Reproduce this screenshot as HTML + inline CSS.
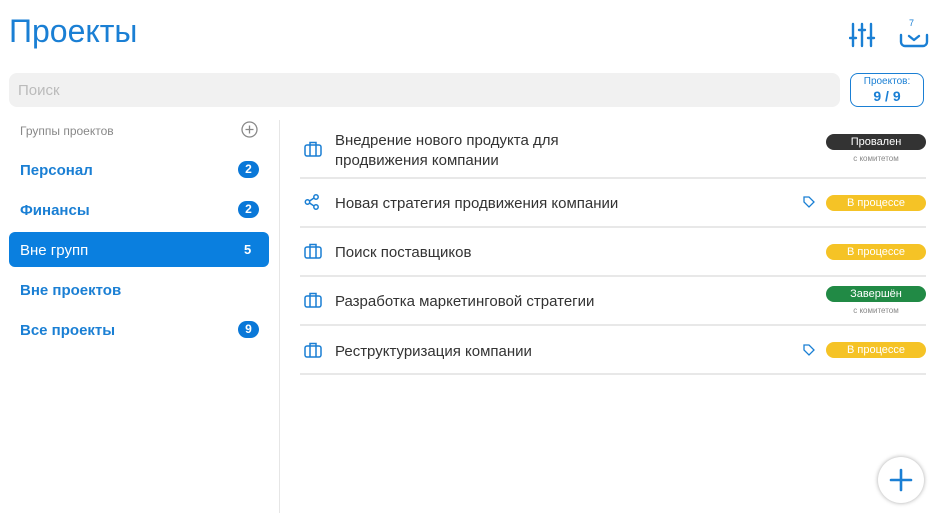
<!DOCTYPE html>
<html><head><meta charset="utf-8"><style>
*{margin:0;padding:0;box-sizing:border-box}
body{width:940px;height:513px;background:#fff;font-family:"Liberation Sans",sans-serif;position:relative;overflow:hidden}
.a{position:absolute}
.side{color:#1a7fd4;font-size:15px;font-weight:bold;left:20px}
.badge{position:absolute;left:238px;width:21px;height:17px;border-radius:9px;background:#0a78d8;color:#fff;font-size:12px;font-weight:bold;text-align:center;line-height:17px}
.sep{position:absolute;left:300px;width:626px;height:2px;background:#e8e8e8}
.t{position:absolute;left:335px;font-size:15px;color:#333;line-height:20px}
.pill{position:absolute;left:826px;width:100px;height:16px;border-radius:8px;font-size:11px;text-align:center;line-height:16px;color:#fff}
.sub{position:absolute;left:826px;width:100px;text-align:center;font-size:8px;color:#888}
.y{background:#f5c326}
svg.i{position:absolute;left:304px}
</style></head><body>
<div class="a" style="left:9px;top:13px;font-size:32px;color:#1a7fd4">Проекты</div>
<svg class="a" style="left:849px;top:22px" width="27" height="26" viewBox="0 0 27 26" fill="none" stroke="#1a7fd4" stroke-width="2.4" stroke-linecap="round"><path d="M4 2v22M13 2v22M22 2v22M1 16h6M10 8h6M19 16h6"/></svg>
<div class="a" style="left:909px;top:18px;font-size:9px;color:#1a7fd4">7</div>
<svg class="a" style="left:899px;top:30px" width="30" height="18" viewBox="0 0 30 18" fill="none" stroke="#1a7fd4" stroke-width="2.4" stroke-linecap="round" stroke-linejoin="round"><path d="M2 5v7a4 4 0 0 0 4 4h18a4 4 0 0 0 4-4V5M10 6l5 4 5-4"/></svg>
<div class="a" style="left:9px;top:73px;width:831px;height:34px;background:#f1f1f1;border-radius:8px;color:#bbb;font-size:15px;padding:9px 9px">Поиск</div>
<div class="a" style="left:850px;top:73px;width:74px;height:34px;border:1.5px solid #1a7fd4;border-radius:8px;color:#1a7fd4;text-align:center"><div style="font-size:10px;margin-top:2px">Проектов:</div><div style="font-size:14px;font-weight:bold;margin-top:1px">9 / 9</div></div>
<div class="a" style="left:20px;top:124px;font-size:12px;color:#888">Группы проектов</div>
<svg class="a" style="left:241px;top:121px" width="17" height="17" viewBox="0 0 17 17" fill="none" stroke="#888" stroke-width="1.3"><circle cx="8.5" cy="8.5" r="7.5"/><path d="M8.5 4.5v8M4.5 8.5h8"/></svg>
<div class="a side" style="top:162px">Персонал</div><div class="badge" style="top:161px">2</div>
<div class="a side" style="top:202px">Финансы</div><div class="badge" style="top:201px">2</div>
<div class="a" style="left:9px;top:232px;width:260px;height:35px;background:#0a7fdf;border-radius:6px"></div>
<div class="a side" style="top:242px;color:#fff;font-weight:normal">Вне групп</div><div class="a" style="left:244px;top:242px;color:#fff;font-size:13px;font-weight:bold">5</div>
<div class="a side" style="top:282px">Вне проектов</div>
<div class="a side" style="top:322px">Все проекты</div><div class="badge" style="top:321px">9</div>
<div class="a" style="left:279px;top:120px;width:1px;height:393px;background:#e6e6e6"></div>

<svg class="i" style="top:141px" width="18" height="16" viewBox="0 0 18 16" fill="none" stroke="#1a7fd4" stroke-width="1.5"><rect x="1" y="4" width="16" height="11" rx="2"/><path d="M6 4V1.5h6V4M6 4v11M12 4v11"/></svg>
<div class="t" style="top:131px">Внедрение нового продукта для<br>продвижения компании</div>
<div class="pill" style="top:134px;background:#333">Провален</div><div class="sub" style="top:154px">с комитетом</div>
<div class="sep" style="top:177px"></div>
<svg class="i" style="top:194px" width="16" height="16" viewBox="0 0 16 16" fill="none" stroke="#1a7fd4" stroke-width="1.5"><circle cx="3.5" cy="8" r="2.2"/><circle cx="12" cy="3" r="2.2"/><circle cx="12" cy="13" r="2.2"/><path d="M5.5 7l4.5-3M5.5 9l4.5 3"/></svg>
<div class="t" style="top:194px">Новая стратегия продвижения компании</div>
<svg class="a" style="left:803px;top:196px" width="12" height="12" viewBox="0 0 12 12" fill="none" stroke="#1a7fd4" stroke-width="1.3"><path d="M1 1h5l5 5-5 5-5-5z"/></svg>
<div class="pill y" style="top:195px">В процессе</div>
<div class="sep" style="top:226px"></div>
<svg class="i" style="top:243px" width="18" height="16" viewBox="0 0 18 16" fill="none" stroke="#1a7fd4" stroke-width="1.5"><rect x="1" y="4" width="16" height="11" rx="2"/><path d="M6 4V1.5h6V4M6 4v11M12 4v11"/></svg>
<div class="t" style="top:243px">Поиск поставщиков</div>
<div class="pill y" style="top:244px">В процессе</div>
<div class="sep" style="top:275px"></div>
<svg class="i" style="top:292px" width="18" height="16" viewBox="0 0 18 16" fill="none" stroke="#1a7fd4" stroke-width="1.5"><rect x="1" y="4" width="16" height="11" rx="2"/><path d="M6 4V1.5h6V4M6 4v11M12 4v11"/></svg>
<div class="t" style="top:292px">Разработка маркетинговой стратегии</div>
<div class="pill" style="top:286px;background:#218a45">Завершён</div><div class="sub" style="top:306px">с комитетом</div>
<div class="sep" style="top:324px"></div>
<svg class="i" style="top:342px" width="18" height="16" viewBox="0 0 18 16" fill="none" stroke="#1a7fd4" stroke-width="1.5"><rect x="1" y="4" width="16" height="11" rx="2"/><path d="M6 4V1.5h6V4M6 4v11M12 4v11"/></svg>
<div class="t" style="top:342px">Реструктуризация компании</div>
<svg class="a" style="left:803px;top:344px" width="12" height="12" viewBox="0 0 12 12" fill="none" stroke="#1a7fd4" stroke-width="1.3"><path d="M1 1h5l5 5-5 5-5-5z"/></svg>
<div class="pill y" style="top:342px">В процессе</div>
<div class="sep" style="top:373px"></div>

<div class="a" style="left:878px;top:457px;width:46px;height:46px;border-radius:50%;background:#fff;box-shadow:0 0 4px rgba(0,0,0,.35)"></div>
<svg class="a" style="left:889px;top:468px" width="24" height="24" viewBox="0 0 24 24" stroke="#1a7fd4" stroke-width="2.6" stroke-linecap="round"><path d="M12 2v20M2 12h20"/></svg>
</body></html>
